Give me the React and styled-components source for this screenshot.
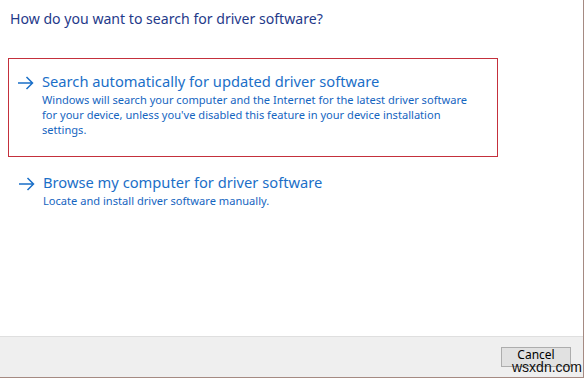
import React from 'react';
import styled, { createGlobalStyle } from 'styled-components';

const GlobalStyle = createGlobalStyle`
  html, body {
    margin: 0;
    padding: 0;
    background: #ffffff;
  }
`;

const Window = styled.div`
  display: flex;
  flex-direction: column;

  width: 583px;
  height: 377px;

  background-color: #ffffff;
  border-right: 1px solid #a58a82;
  border-bottom: 1px solid #a58a82;

  font-family: 'Noto Sans', 'Open Sans', sans-serif;
`;

const Body = styled.div`
  flex: 1;
  padding: 8px 0 0 8px;
`;

const Title = styled.h1`
  margin: 0 0 0 2px;

  font-size: 14.1px;
  font-weight: 400;
  line-height: 22px;
  color: #1f3a8a;
`;

const Option = styled.div`
  display: flex;
  align-items: flex-start;

  width: 490px;
  box-sizing: border-box;
  margin-top: ${props => props.$top}px;
  padding: ${props => props.$selected ? '12px 8px 19px 8px' : '14px 8px 0 9px'};

  border: 1px solid ${props => props.$selected ? '#c4303c' : 'transparent'};
`;

const Arrow = styled.svg`
  flex: none;
  width: 17px;
  height: 14px;
  margin: 5px 8px 0 0;
`;

const OptionText = styled.div`
  display: flex;
  flex-direction: column;
  white-space: nowrap;
`;

const OptionTitle = styled.div`
  font-size: 14.7px;
  line-height: 20px;
  color: #1b6fc8;
`;

const OptionDesc = styled.div`
  margin-top: 1px;

  font-size: 11.1px;
  line-height: 15px;
  color: #1565bf;
`;

const Footer = styled.div`
  display: flex;
  justify-content: flex-end;
  align-items: flex-start;

  height: 41px;
  padding: 10px 12px 0 0;
  box-sizing: border-box;

  background-color: #efefef;
  border-top: 1px solid #dfdfdf;
`;

const ButtonWrap = styled.div`
  position: relative;
`;

const Button = styled.button`
  display: block;
  width: 70px;
  height: 20px;
  padding: 0 0 5px;

  background-color: #e1e1e1;
  border: 1px solid #adadad;

  font-family: 'Noto Sans', 'Open Sans', sans-serif;
  font-size: 12px;
  line-height: 14px;
  color: #000000;
`;

const Watermark = styled.span`
  position: absolute;
  left: 11px;
  top: 12px;

  font-family: 'Liberation Sans', Arial, sans-serif;
  font-size: 14px;
  line-height: 16px;
  color: #111111;
  white-space: nowrap;
  pointer-events: none;
`;

const ArrowIcon = () => (
  <Arrow viewBox="0 0 17 14">
    <path d="M1 7 H15.5 M9.5 1 L15.5 7 L9.5 13" fill="none" stroke="#1a6fc8" strokeWidth="1.5" />
  </Arrow>
);

const App = () => (
  <>
    <GlobalStyle />
    <Window>
      <Body>
        <Title>How do you want to search for driver software?</Title>
        <Option $selected $top={28}>
          <ArrowIcon />
          <OptionText>
            <OptionTitle>Search automatically for updated driver software</OptionTitle>
            <OptionDesc>
              Windows will search your computer and the Internet for the latest driver software<br />
              for your device, unless you've disabled this feature in your device installation<br />
              settings.
            </OptionDesc>
          </OptionText>
        </Option>
        <Option $top={0}>
          <ArrowIcon />
          <OptionText>
            <OptionTitle>Browse my computer for driver software</OptionTitle>
            <OptionDesc>Locate and install driver software manually.</OptionDesc>
          </OptionText>
        </Option>
      </Body>
      <Footer>
        <ButtonWrap>
          <Button>Cancel</Button>
          <Watermark>wsxdn.com</Watermark>
        </ButtonWrap>
      </Footer>
    </Window>
  </>
);

export default App;
